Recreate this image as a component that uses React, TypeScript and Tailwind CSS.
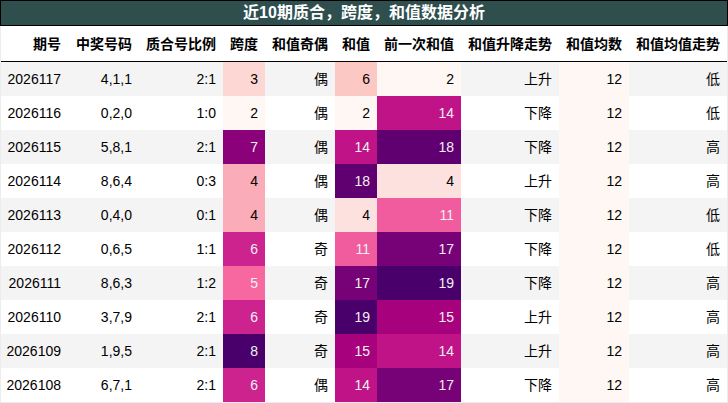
const headers = [
  "期号",
  "中奖号码",
  "质合号比例",
  "跨度",
  "和值奇偶",
  "和值",
  "前一次和值",
  "和值升降走势",
  "和值均数",
  "和值均值走势",
];

type Row = [string, string, string, number, string, number, number, string, number, string];

const rows: Row[] = [
  ["2026117", "4,1,1", "2:1", 3, "偶", 6, 2, "上升", 12, "低"],
  ["2026116", "0,2,0", "1:0", 2, "偶", 2, 14, "下降", 12, "低"],
  ["2026115", "5,8,1", "2:1", 7, "偶", 14, 18, "下降", 12, "高"],
  ["2026114", "8,6,4", "0:3", 4, "偶", 18, 4, "上升", 12, "高"],
  ["2026113", "0,4,0", "0:1", 4, "偶", 4, 11, "下降", 12, "低"],
  ["2026112", "0,6,5", "1:1", 6, "奇", 11, 17, "下降", 12, "低"],
  ["2026111", "8,6,3", "1:2", 5, "奇", 17, 19, "下降", 12, "高"],
  ["2026110", "3,7,9", "2:1", 6, "奇", 19, 15, "上升", 12, "高"],
  ["2026109", "1,9,5", "2:1", 8, "奇", 15, 14, "上升", 12, "高"],
  ["2026108", "6,7,1", "2:1", 6, "偶", 14, 17, "下降", 12, "高"],
];

// RdPu gradient, span column (min 2, max 8)
const spanColors: Record<number, string> = {
  2: "bg-[#fff7f3] text-black",
  3: "bg-[#fdd7d3] text-black",
  4: "bg-[#fbacb9] text-black",
  5: "bg-[#f768a1] text-[#f1f1f1]",
  6: "bg-[#cd238f] text-[#f1f1f1]",
  7: "bg-[#8b0179] text-[#f1f1f1]",
  8: "bg-[#49006a] text-[#f1f1f1]",
};

// RdPu gradient, sum columns (min 2, max 19)
const sumColors: Record<number, string> = {
  2: "bg-[#fff7f3] text-black",
  4: "bg-[#fde1de] text-black",
  6: "bg-[#fcc8c3] text-black",
  11: "bg-[#f15c9f] text-[#f1f1f1]",
  14: "bg-[#bf1387] text-[#f1f1f1]",
  15: "bg-[#a8017d] text-[#f1f1f1]",
  17: "bg-[#770176] text-[#f1f1f1]",
  18: "bg-[#600070] text-[#f1f1f1]",
  19: "bg-[#49006a] text-[#f1f1f1]",
};

const cols = "grid grid-cols-[67px_71px_84px_42px_70px_42px_84px_98px_70px_98px]";
const cell = "flex items-center justify-end pr-[7px] whitespace-nowrap";

export default function App() {
  return (
    <div
      className="w-[728px] bg-white text-[14px] text-black"
      style={{ fontFamily: '"Liberation Sans", "Noto Sans CJK SC", sans-serif' }}
    >
      <div className="h-[26px] border border-black bg-[#2f4f4f] flex items-center justify-center text-white font-bold text-[16px]">
        近10期质合，跨度，和值数据分析
      </div>
      <div className="border-x border-b border-[#ececec]">
        <div className={`${cols} h-[36px] border-b border-black font-bold`}>
          {headers.map((h) => (
            <div key={h} className={`${cell} pt-[2px]`}>
              {h}
            </div>
          ))}
        </div>
        {rows.map((r, i) => (
          <div
            key={r[0]}
            className={`${cols} h-[34px] ${i % 2 === 0 ? "bg-[#f4f4f4]" : "bg-white"}`}
          >
            <div className={cell}>{r[0]}</div>
            <div className={cell}>{r[1]}</div>
            <div className={cell}>{r[2]}</div>
            <div className={`${cell} ${spanColors[r[3]]}`}>{r[3]}</div>
            <div className={cell}>{r[4]}</div>
            <div className={`${cell} ${sumColors[r[5]]}`}>{r[5]}</div>
            <div className={`${cell} ${sumColors[r[6]]}`}>{r[6]}</div>
            <div className={cell}>{r[7]}</div>
            <div className={`${cell} bg-[#fff7f3]`}>{r[8]}</div>
            <div className={cell}>{r[9]}</div>
          </div>
        ))}
      </div>
    </div>
  );
}
